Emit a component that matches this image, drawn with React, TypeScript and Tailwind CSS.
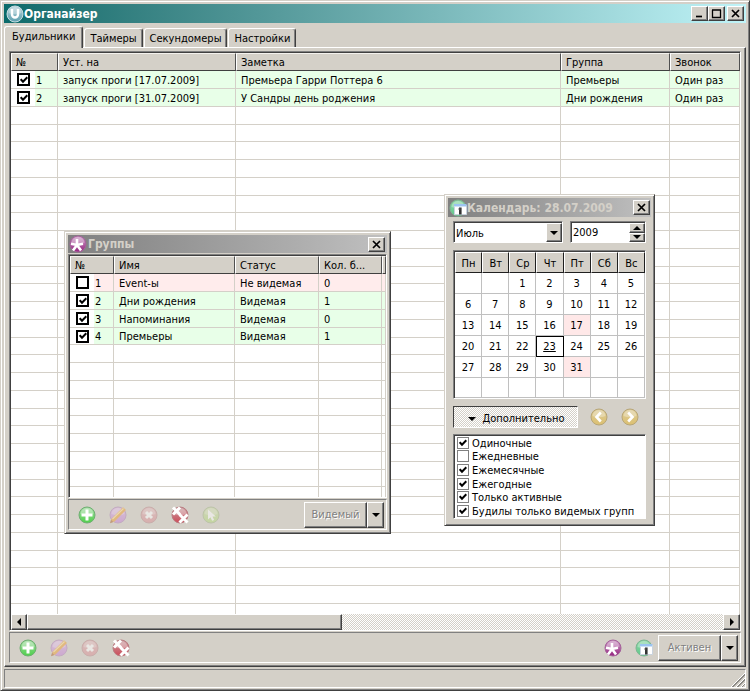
import React, { useState } from "react";

interface Column {
  title: string;
  width: string;
}

interface ListRow {
  checked: boolean;
  cells: string[];
  tone: "green" | "pink";
}

const alarmColumns: Column[] = [
  { title: "№", width: "w-[47px]" },
  { title: "Уст. на", width: "w-[178px]" },
  { title: "Заметка", width: "w-[325px]" },
  { title: "Группа", width: "w-[109px]" },
  { title: "Звонок", width: "w-auto" },
];

const alarms: ListRow[] = [
  {
    checked: true,
    tone: "green",
    cells: ["1", "запуск проги [17.07.2009]", "Премьера Гарри Поттера 6", "Премьеры", "Один раз"],
  },
  {
    checked: true,
    tone: "green",
    cells: ["2", "запуск проги [31.07.2009]", "У Сандры день роджения", "Дни рождения", "Один раз"],
  },
];

const groupColumns: Column[] = [
  { title: "№", width: "w-[44px]" },
  { title: "Имя", width: "w-[121px]" },
  { title: "Статус", width: "w-[84px]" },
  { title: "Кол. б...", width: "w-[63px]" },
  { title: "", width: "w-auto" },
];

const groups: ListRow[] = [
  { checked: false, tone: "pink", cells: ["1", "Event-ы", "Не видемая", "0", ""] },
  { checked: true, tone: "green", cells: ["2", "Дни рождения", "Видемая", "1", ""] },
  { checked: true, tone: "green", cells: ["3", "Напоминания", "Видемая", "0", ""] },
  { checked: true, tone: "green", cells: ["4", "Премьеры", "Видемая", "1", ""] },
];

const weekDays = ["Пн", "Вт", "Ср", "Чт", "Пт", "Сб", "Вс"];
const months = [
  "Январь",
  "Февраль",
  "Март",
  "Апрель",
  "Май",
  "Июнь",
  "Июль",
  "Август",
  "Сентябрь",
  "Октябрь",
  "Ноябрь",
  "Декабрь",
];

const filters = [
  { label: "Одиночные", on: true },
  { label: "Ежедневные", on: false },
  { label: "Ежемесячные", on: true },
  { label: "Ежегодные", on: true },
  { label: "Только активные", on: true },
  { label: "Будилы только видемых групп", on: true },
];

// Classic 3D edges
const raised =
  "bg-[#d4d0c8] border border-t-white border-l-white border-r-[#404040] border-b-[#404040] shadow-[inset_-1px_-1px_0_#808080]";
const sunken =
  "border border-t-[#808080] border-l-[#808080] border-r-white border-b-white";
const windowFrame =
  "bg-[#d4d0c8] border border-t-[#d4d0c8] border-l-[#d4d0c8] border-r-[#404040] border-b-[#404040] shadow-[inset_1px_1px_0_#fff,inset_-1px_-1px_0_#808080]";
const dither =
  "bg-[repeating-conic-gradient(#fff_0_25%,#d4d0c8_0_50%)] bg-[length:2px_2px]";

/* ---------- icons ---------- */

const Ball: React.FC<{ id: string; from: string; to: string; edge: string }> = ({
  id,
  from,
  to,
  edge,
}) => (
  <>
    <defs>
      <linearGradient id={id} x1="0" y1="0" x2="0" y2="1">
        <stop offset="0" stopColor={from} />
        <stop offset="1" stopColor={to} />
      </linearGradient>
    </defs>
    <circle cx="9" cy="9" r="8" fill={`url(#${id})`} stroke={edge} />
    <path d="M2.5 8a6.5 6 0 0 1 13 0c-4 1.600-9 1.600-13 0z" fill="#fff" opacity=".3" />
  </>
);

const AddIcon = () => (
  <svg className="size-[18px]" viewBox="0 0 18 18">
    <Ball id="add" from="#a5dba5" to="#4fd04a" edge="#6fae72" />
    <path d="M9 3.500v11M3.500 9h11" stroke="#fff" strokeWidth="3" />
  </svg>
);

const EditIcon = () => (
  <svg className="size-[18px] opacity-60" viewBox="0 0 18 18">
    <Ball id="edit" from="#d9b4dc" to="#c98fd6" edge="#b894be" />
    <path d="M1.500 16.800l1-4L14 1.300l3 2.700L5.500 15.500z" fill="#eaa94e" />
    <path d="M3.500 13L14.500 2.500" stroke="#f8dc9c" strokeWidth="1.200" />
    <path d="M1 17.300l1-3.500 2.300 2.300z" fill="#b0764e" />
  </svg>
);

const DeleteIcon = () => (
  <svg className="size-[18px] opacity-50" viewBox="0 0 18 18">
    <Ball id="del" from="#dba9ad" to="#dc8f96" edge="#c08d90" />
    <path d="M6 6l6 6M12 6l-6 6" stroke="#fff" strokeWidth="3" />
  </svg>
);

const DeleteAllIcon = () => (
  <svg className="size-[18px]" viewBox="0 0 18 18">
    <Ball id="delall" from="#c9a0a2" to="#cc4a58" edge="#b97d82" />
    <path
      d="M2 1.500l7 7M9 1.500l-7 7M8.500 8.500l8 8M16.500 8.500l-8 8"
      stroke="#fff"
      strokeWidth="3"
    />
  </svg>
);

const PointerIcon = () => (
  <svg className="size-[18px] opacity-50" viewBox="0 0 18 18">
    <Ball id="ptr" from="#c9d7a4" to="#b5dc7c" edge="#a7b98a" />
    <path d="M6 3.500v10l2.500-2.300 1.600 3.600 2-.9-1.600-3.500h3.300z" fill="#fff" />
  </svg>
);

const GroupsIcon: React.FC<{ id: string }> = ({ id }) => (
  <svg className="size-[18px]" viewBox="0 0 18 18">
    <Ball id={id} from="#cf9fc8" to="#94237f" edge="#a5629b" />
    <path
      d="M8 4v6M2 8.800L8 10l6-1.200M4 15.500L8 10l4 5.500"
      fill="none"
      stroke="#fff"
      strokeWidth="2.600"
    />
  </svg>
);

const CalendarIcon: React.FC<{ id: string }> = ({ id }) => (
  <svg className="size-[18px]" viewBox="0 0 18 18">
    <Ball id={id} from="#8fd6a8" to="#5fc98a" edge="#7fb593" />
    <path d="M5 6h12.500v9.500H5z" fill="#fff" />
    <path d="M5 5h12.500v2.500H5z" fill="#9cc4f0" />
    <path d="M5.500 7.500v8H17.500v-8" fill="none" stroke="#c9d3de" />
    <path d="M11.300 8.500v7" stroke="#333" strokeWidth="2.600" />
    <path d="M9.500 10h2" stroke="#555" strokeWidth="1.500" />
  </svg>
);

const ArrowBall: React.FC<{ dir: "left" | "right" }> = ({ dir }) => (
  <svg className="size-[18px]" viewBox="0 0 18 18">
    <Ball id={`arrow-${dir}`} from="#dccb98" to="#dcc070" edge="#b8a678" />
    <path
      d={dir === "left" ? "M10.800 4.500L6.500 9l4.300 4.500" : "M7.200 4.500L11.500 9l-4.300 4.500"}
      fill="none"
      stroke="#fff"
      strokeWidth="2.600"
    />
  </svg>
);

const LogoIcon = () => (
  <svg className="size-[18px]" viewBox="0 0 18 18">
    <Ball id="logo" from="#b9d3da" to="#5c9fae" edge="#c7dde2" />
    <path d="M6 4v5.500a3 3 0 0 0 6 0V4" fill="none" stroke="#fff" strokeWidth="2.400" />
  </svg>
);

const Triangle: React.FC<{ dir: "up" | "down" | "left" | "right" }> = ({ dir }) => {
  const paths = {
    up: "M0 6l4-4 4 4z",
    down: "M0 2h8L4 6z",
    left: "M6 0v8L2 4z",
    right: "M2 0l4 4-4 4z",
  };
  return (
    <svg className="size-2 shrink-0" viewBox="0 0 8 8">
      <path d={paths[dir]} />
    </svg>
  );
};

/* ---------- shared parts ---------- */

const CaptionButton: React.FC<{ kind: "min" | "max" | "close" }> = ({ kind }) => {
  const paths = {
    min: "M2 8.500h6",
    max: "M1 2h9M1.500 2v7.500h8V2",
    close: "M2 2l7 7M9 2l-7 7",
  };
  const labels = { min: "Свернуть", max: "Развернуть", close: "Закрыть" };
  return (
    <button
      type="button"
      aria-label={labels[kind]}
      className={`flex h-[15px] w-[17px] items-center justify-center ${raised}`}
    >
      <svg className="size-[11px]" viewBox="0 0 11 11">
        <path
          d={paths[kind]}
          fill="none"
          stroke="#000"
          strokeWidth={kind === "max" ? 1.3 : 1.7}
        />
      </svg>
    </button>
  );
};

const CheckMark = () => (
  <svg
    className="pointer-events-none col-start-1 row-start-1 size-2 place-self-center"
    viewBox="0 0 8 8"
  >
    <path d="M.7 3.200L3 5.700 7.300 1.300" fill="none" stroke="#000" strokeWidth="2" />
  </svg>
);

// Thick black box used in the list views
const RowCheck: React.FC<{ initial: boolean; label: string }> = ({ initial, label }) => {
  const [on, setOn] = useState(initial);
  return (
    <span className="grid h-4 w-[25px] shrink-0 place-items-center">
      <input
        type="checkbox"
        aria-label={label}
        checked={on}
        onChange={() => setOn(!on)}
        className="col-start-1 row-start-1 size-[13px] appearance-none border-2 border-black bg-white"
      />
      {on && <CheckMark />}
    </span>
  );
};

const FilterCheck: React.FC<{ initial: boolean; label: string }> = ({ initial, label }) => {
  const [on, setOn] = useState(initial);
  return (
    <label className="flex items-center gap-[3px] pl-[2px] leading-none">
      <span className="grid">
        <input
          type="checkbox"
          checked={on}
          onChange={() => setOn(!on)}
          className="col-start-1 row-start-1 size-3 appearance-none border border-[#808080] bg-white"
        />
        {on && <CheckMark />}
      </span>
      <span className="pt-px">{label}</span>
    </label>
  );
};

interface ListViewProps {
  columns: Column[];
  rows: ListRow[];
  total: number;
}

const ListView: React.FC<ListViewProps> = ({ columns, rows, total }) => {
  const blank = Array.from({ length: total - rows.length }, (_, i) => i + rows.length);
  const rowHeight = (i: number) => (i % 4 === 3 ? "h-[17px]" : "h-[18px]");
  return (
    <table className="w-full table-fixed border-separate border-spacing-0 text-left leading-[14px]">
      <thead>
        <tr>
          {columns.map((col, i) => (
            <th
              key={i}
              className={`${col.width} h-[18px] overflow-hidden whitespace-nowrap border border-t-[#f4f2ee] border-l-white border-r-[#505050] border-b-[#404040] bg-[#d4d0c8] px-1 pt-[2px] pb-0 font-normal`}
            >
              {col.title}
            </th>
          ))}
        </tr>
      </thead>
      <tbody>
        {rows.map((row, i) => (
          <tr key={i} className={row.tone === "green" ? "bg-[#e8ffe8]" : "bg-[#ffecec]"}>
            {row.cells.map((cell, j) => (
              <td
                key={j}
                className={`${rowHeight(i)} overflow-hidden whitespace-nowrap border-r border-b border-[#d4d0c8] p-0 ${
                  j === 0 ? "bg-linear-to-r from-white from-[24px] to-transparent to-[24px]" : ""
                }`}
              >
                {j === 0 ? (
                  <div className="flex items-center">
                    <RowCheck initial={row.checked} label={row.cells[1]} />
                    <span className="pt-[2px]">{cell}</span>
                  </div>
                ) : (
                  <div className="pt-[2px] pl-[5px]">{cell}</div>
                )}
              </td>
            ))}
          </tr>
        ))}
        {blank.map((i) => (
          <tr key={i}>
            {columns.map((_, j) => (
              <td key={j} className={`${rowHeight(i)} border-r border-b border-[#d4d0c8] p-0`} />
            ))}
          </tr>
        ))}
      </tbody>
    </table>
  );
};

const ToolButton: React.FC<{
  label: string;
  disabled?: boolean;
  children: React.ReactNode;
}> = ({ label, disabled, children }) => (
  <button type="button" aria-label={label} disabled={disabled} className="shrink-0">
    {children}
  </button>
);

const SplitButton: React.FC<{ label: string }> = ({ label }) => (
  <div className="flex h-[26px]">
    <button
      type="button"
      disabled
      className={`w-[63px] pt-[2px] text-[#808080] [text-shadow:1px_1px_0_#fff] ${raised}`}
    >
      {label}
    </button>
    <button
      type="button"
      aria-label="Выбрать"
      className={`flex w-[17px] items-center justify-center ${raised}`}
    >
      <Triangle dir="down" />
    </button>
  </div>
);

/* ---------- floating windows ---------- */

const GroupsWindow = () => (
  <section
    aria-label="Группы"
    className={`absolute top-[231px] left-16 flex h-[303px] w-[327px] flex-col p-[3px] ${windowFrame}`}
  >
    <header className="flex h-[18px] shrink-0 items-center bg-linear-to-r from-[#808080] to-[#c0c0c0] pr-[2px] pl-px">
      <GroupsIcon id="groups-title" />
      <h2 className="flex-1 pl-px text-[12px] font-bold text-[#d4d0c8]">Группы</h2>
      <CaptionButton kind="close" />
    </header>
    <div className={`mt-px min-h-0 flex-1 ${sunken}`}>
      <div className="h-full overflow-hidden border-t border-l border-[#404040] bg-white">
        <ListView columns={groupColumns} rows={groups} total={14} />
      </div>
    </div>
    <footer className={`mt-px flex h-[31px] shrink-0 items-center gap-[13px] pr-[2px] pl-[9px] ${sunken}`}>
      <ToolButton label="Добавить"><AddIcon /></ToolButton>
      <ToolButton label="Изменить" disabled><EditIcon /></ToolButton>
      <ToolButton label="Удалить" disabled><DeleteIcon /></ToolButton>
      <ToolButton label="Удалить все"><DeleteAllIcon /></ToolButton>
      <ToolButton label="Выбрать" disabled><PointerIcon /></ToolButton>
      <div className="ml-auto">
        <SplitButton label="Видемый" />
      </div>
    </footer>
  </section>
);

const CalendarGrid = () => {
  // July 2009 starts on Wednesday
  const weeks = Array.from({ length: 6 }, (_, w) =>
    weekDays.map((_, d) => {
      const day = w * 7 + d - 1;
      return day >= 1 && day <= 31 ? day : null;
    })
  );
  return (
    <table className="w-full table-fixed border-separate border-spacing-0 text-center leading-4">
      <thead>
        <tr>
          {weekDays.map((day) => (
            <th
              key={day}
              className="h-[21px] border border-t-white border-l-white border-r-[#202020] border-b-[#202020] bg-[#d4d0c8] px-0 pt-[2px] pb-0 font-normal"
            >
              {day}
            </th>
          ))}
        </tr>
      </thead>
      <tbody>
        {weeks.map((week, w) => (
          <tr key={w}>
            {week.map((day, d) => (
              <td
                key={d}
                className={`${w === 5 ? "h-5" : "h-[21px]"} border-r border-b border-[#c0c0c0] px-0 pt-[2px] pb-0 ${
                  day === 17 || day === 31 ? "bg-[#ffe8e8]" : ""
                } ${day === 23 ? "underline outline-1 -outline-offset-1 outline-black" : ""}`}
              >
                {day}
              </td>
            ))}
          </tr>
        ))}
      </tbody>
    </table>
  );
};

const CalendarWindow = () => {
  const [month, setMonth] = useState("Июль");
  const [year, setYear] = useState("2009");

  return (
    <section
      aria-label="Календарь"
      className={`absolute top-[194px] left-[444px] flex w-[211px] flex-col p-[3px] pb-[6px] ${windowFrame}`}
    >
      <header className="flex h-[19px] shrink-0 items-center bg-linear-to-r from-[#808080] to-[#c0c0c0] pr-px pl-px">
        <CalendarIcon id="calendar-title" />
        <h2 className="flex-1 whitespace-nowrap text-[12px] font-bold text-[#d4d0c8]">
          Календарь: 28.07.2009
        </h2>
        <CaptionButton kind="close" />
      </header>
      <div className="px-[5px]">
        <div className="mt-1 flex justify-between">
          <div className={`relative h-[22px] w-[110px] bg-white ${sunken}`}>
            <select
              aria-label="Месяц"
              value={month}
              onChange={(e) => setMonth(e.target.value)}
              className="size-full appearance-none border-t border-l border-[#404040] pt-[3px] pl-px outline-none"
            >
              {months.map((m) => (
                <option key={m}>{m}</option>
              ))}
            </select>
            <span
              className={`pointer-events-none absolute top-px right-0 bottom-0 flex w-4 items-center justify-center ${raised}`}
            >
              <Triangle dir="down" />
            </span>
          </div>
          <div className={`flex h-[22px] w-[76px] bg-white ${sunken}`}>
            <input
              aria-label="Год"
              value={year}
              onChange={(e) => setYear(e.target.value)}
              className="min-w-0 flex-1 border-t border-l border-[#404040] pt-[2px] pl-px outline-none"
            />
            <div className="flex w-4 flex-col border-t border-[#404040]">
              <button
                type="button"
                aria-label="Больше"
                onClick={() => setYear(String(Number(year) + 1))}
                className={`flex min-h-0 flex-1 items-center justify-center ${raised}`}
              >
                <Triangle dir="up" />
              </button>
              <button
                type="button"
                aria-label="Меньше"
                onClick={() => setYear(String(Number(year) - 1))}
                className={`flex min-h-0 flex-1 items-center justify-center ${raised}`}
              >
                <Triangle dir="down" />
              </button>
            </div>
          </div>
        </div>
        <div className={`mt-[7px] ${sunken}`}>
          <div className="border-t border-l border-[#404040] bg-white">
            <CalendarGrid />
          </div>
        </div>
        <div className="mt-[7px] flex items-center">
          <button
            type="button"
            className={`flex h-[22px] w-[125px] items-center justify-center gap-[6px] border border-t-[#404040] border-l-[#404040] border-r-white border-b-white pt-1 pl-[2px] ${dither}`}
          >
            <Triangle dir="down" />
            Дополнительно
          </button>
          <button type="button" aria-label="Назад" className="ml-3">
            <ArrowBall dir="left" />
          </button>
          <button type="button" aria-label="Вперёд" className="ml-[13px]">
            <ArrowBall dir="right" />
          </button>
        </div>
        <div className={`mt-[6px] ${sunken}`}>
          <div className="grid h-[83px] auto-rows-fr border-t border-l border-[#404040] bg-white">
            {filters.map((f) => (
              <FilterCheck key={f.label} initial={f.on} label={f.label} />
            ))}
          </div>
        </div>
      </div>
    </section>
  );
};

/* ---------- main window ---------- */

const tabs = ["Будильники", "Таймеры", "Секундомеры", "Настройки"];

const Tabs = () => {
  const [active, setActive] = useState(tabs[0]);
  return (
    <div role="tablist" className="flex h-[22px] items-end gap-px">
      {tabs.map((tab) => (
        <button
          key={tab}
          type="button"
          role="tab"
          aria-selected={tab === active}
          onClick={() => setActive(tab)}
          className={`rounded-t-[3px] border border-b-0 border-t-white border-l-white border-r-[#404040] bg-[#d4d0c8] shadow-[inset_-1px_0_0_#808080] ${
            tab === active ? "z-10 -mb-px h-[22px] px-[7px]" : "h-[19px] px-[5px] pt-[2px]"
          }`}
        >
          {tab}
        </button>
      ))}
    </div>
  );
};

const ScrollBar = () => (
  <div className={`flex h-4 shrink-0 ${dither}`}>
    <button
      type="button"
      aria-label="Прокрутить влево"
      className={`flex w-4 items-center justify-center ${raised}`}
    >
      <Triangle dir="left" />
    </button>
    <div className={`w-[315px] ${raised}`} />
    <button
      type="button"
      aria-label="Прокрутить вправо"
      className={`ml-auto flex w-[17px] items-center justify-center ${raised}`}
    >
      <Triangle dir="right" />
    </button>
  </div>
);

const App: React.FC = () => {
  return (
    <div className="relative h-screen font-['DejaVu_Sans_Condensed','DejaVu_Sans',sans-serif] text-[11px] text-black">
      <main className={`flex h-full flex-col p-[3px] pb-[2px] ${windowFrame}`}>
        <header className="flex h-[19px] shrink-0 items-center bg-linear-to-r from-[#0a6a6a] to-[#c0f4f8] pr-[2px] pl-[2px]">
          <LogoIcon />
          <h1 className="flex-1 text-[12px] font-bold text-white">Органайзер</h1>
          <CaptionButton kind="min" />
          <CaptionButton kind="max" />
          <span className="w-[2px]" />
          <CaptionButton kind="close" />
        </header>
        <div className="mt-[2px] flex min-h-0 flex-1 flex-col">
          <Tabs />
          <div className="flex min-h-0 flex-1 flex-col border border-t-white border-l-white border-r-[#404040] border-b-[#404040] px-1 py-[3px] shadow-[inset_-1px_-1px_0_#808080]">
            <div className={`min-h-0 flex-1 ${sunken}`}>
              <div className="flex h-full flex-col border-t border-l border-[#404040] bg-white">
                <div className="min-h-0 flex-1 overflow-hidden">
                  <ListView columns={alarmColumns} rows={alarms} total={60} />
                </div>
                <ScrollBar />
              </div>
            </div>
            <footer className={`mt-px flex h-[31px] shrink-0 items-center gap-[13px] pr-[2px] pl-[9px] ${sunken}`}>
              <ToolButton label="Добавить"><AddIcon /></ToolButton>
              <ToolButton label="Изменить" disabled><EditIcon /></ToolButton>
              <ToolButton label="Удалить" disabled><DeleteIcon /></ToolButton>
              <ToolButton label="Удалить все"><DeleteAllIcon /></ToolButton>
              <div className="ml-auto flex items-center gap-[13px]">
                <ToolButton label="Группы"><GroupsIcon id="groups-tool" /></ToolButton>
                <ToolButton label="Календарь"><CalendarIcon id="calendar-tool" /></ToolButton>
              </div>
              <div className="-ml-2">
                <SplitButton label="Активен" />
              </div>
            </footer>
          </div>
        </div>
        <div className={`mt-[2px] flex h-[19px] shrink-0 items-end justify-end ${sunken}`}>
          <svg className="size-[14px]" viewBox="0 0 14 14">
            <path d="M0 14L14 0M5 14l9-9M10 14l4-4" stroke="#fff" />
            <path d="M1 14L14 1M2 14L14 2M6 14l8-8M7 14l7-7M11 14l3-3" stroke="#8c8a86" />
          </svg>
        </div>
      </main>
      <GroupsWindow />
      <CalendarWindow />
    </div>
  );
};

export default App;
